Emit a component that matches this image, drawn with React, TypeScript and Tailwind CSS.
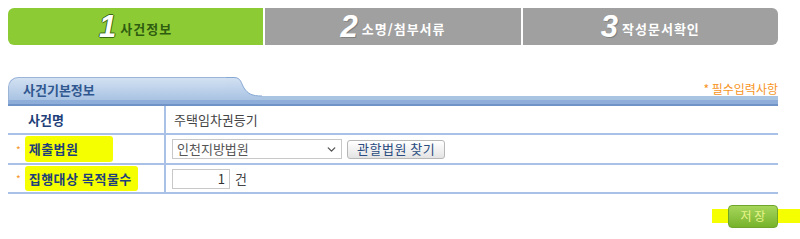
import { ChevronDown } from 'lucide-react';

const font = { fontFamily: '"Noto Sans CJK KR", "Noto Sans", sans-serif' };

const steps = [
  { n: '1', t: '사건정보', active: true },
  { n: '2', t: '소명/첨부서류', active: false },
  { n: '3', t: '작성문서확인', active: false },
];

export default function App() {
  return (
    <div className="relative w-[800px] h-[239px] bg-white px-2 pt-2 text-[13px] text-[#333]" style={font}>
      {/* STEPS */}
      <div className="w-[770px] flex gap-[2px]">
        {steps.map((s, i) => (
          <div
            key={s.n}
            className={`flex-1 h-[37px] flex items-center justify-center gap-1 ${
              s.active ? 'bg-[#8dcb35]' : 'bg-[#a0a0a0]'
            } ${i === 0 ? 'rounded-l-[6px]' : ''} ${i === 2 ? 'rounded-r-[6px]' : ''}`}
          >
            <span
              className={`text-[31px] leading-none font-bold italic text-white ${
                s.active ? '[text-shadow:-1px_0_#3b6a12,1px_0_#3b6a12,0_1px_#3b6a12,0_-1px_#3b6a12]' : '[text-shadow:1px_1px_#808080]'
              }`}
              style={{ fontFamily: '"Liberation Sans", Arial, sans-serif' }}
            >
              {s.n}
            </span>
            <span className={`text-[13px] font-bold mt-1 tracking-[1px] ${s.active ? 'text-[#2f5d10]' : 'text-white'}`}>{s.t}</span>
          </div>
        ))}
      </div>

      {/* SECTION HEADER */}
      <div className="w-[770px] mt-[32px]">
        <div className="flex items-end h-[23px]">
          <div className="w-[218px] h-[23px] rounded-tl-[10px] border-t border-l border-[#9bb5d8] bg-gradient-to-b from-[#d3e1f2] to-[#a9c3e3] flex items-center pl-[14px] pt-[2px]">
            <span className="text-[13px] font-bold text-[#30578f]">사건기본정보</span>
          </div>
          <svg width="36" height="23" viewBox="0 0 36 23" className="flex-none">
            <defs>
              <linearGradient id="hg" x1="0" y1="0" x2="0" y2="1">
                <stop offset="0" stopColor="#d3e1f2" />
                <stop offset="1" stopColor="#a9c3e3" />
              </linearGradient>
            </defs>
            <path d="M0 0.5 H8 C15 0.5 15 6 18 11 C22 17 26 19 36 19 V23 H0 Z" fill="url(#hg)" />
            <path d="M0 0.5 H8 C15 0.5 15 6 18 11 C22 17 26 19 36 19" fill="none" stroke="#86a8d4" strokeWidth="1" />
          </svg>
          <div className="flex-1 h-[4px] bg-[#a9c3e3]" />
        </div>
        <div className="absolute right-[22px] top-[80px] text-[12px] text-[#f7941d]">* 필수입력사항</div>
        <div className="h-[6px] bg-[#8eadd8] border-b-2 border-[#6f93c6]" />

        {/* TABLE */}
        <div className="flex h-[29px] border-b-2 border-[#a9c1e6]">
          <div className="w-[158px] flex items-center pl-[20px] font-bold text-[#1f3f7a] border-r-2 border-[#a9c1e6]">사건명</div>
          <div className="flex-1 flex items-center pl-[8px] text-[#444]">주택임차권등기</div>
        </div>
        <div className="flex h-[30px] border-b-2 border-[#a9c1e6]">
          <div className="w-[158px] flex items-center pl-[8px] border-r-2 border-[#a9c1e6]">
            <span className="text-[#f7941d] text-[10px] mr-[4px]">*</span>
            <span className="bg-[#f6ff00] font-bold text-[#1f3f7a] pl-[4px] py-[3px] pr-[34px] rounded-[3px] tracking-[0.5px]">제출법원</span>
          </div>
          <div className="flex-1 flex items-center pl-[6px] gap-[5px]">
            <div className="w-[170px] h-[20px] border border-[#c8c8c8] bg-white flex items-center justify-between pl-[4px] pr-[3px] text-[#555] text-[13px]">
              <span>인천지방법원</span>
              <ChevronDown size={13} strokeWidth={2.5} className="text-[#555]" />
            </div>
            <div className="h-[19px] px-[9px] border border-[#b7b7b7] rounded-[3px] bg-gradient-to-b from-white to-[#e4e4e4] flex items-center text-[#2a4c80] tracking-[0.5px]">
              관할법원 찾기
            </div>
          </div>
        </div>
        <div className="flex h-[29px] border-b-2 border-[#a9c1e6]">
          <div className="w-[158px] flex items-center pl-[8px] border-r-2 border-[#a9c1e6]">
            <span className="text-[#f7941d] text-[10px] mr-[4px]">*</span>
            <span className="bg-[#f6ff00] font-bold text-[#1f3f7a] pl-[4px] py-[3px] pr-[6px] rounded-[3px] tracking-[0.5px]">집행대상 목적물수</span>
          </div>
          <div className="flex-1 flex items-center pl-[6px] gap-[5px]">
            <div className="w-[58px] h-[20px] border border-[#c8c8c8] bg-white flex items-center justify-end pr-[4px] text-[#333]">1</div>
            <span className="text-[#444]">건</span>
          </div>
        </div>

        {/* SAVE */}
        <div className="flex justify-end mt-[10px] -mr-[22px]">
          <div className="relative w-[88px] h-[24px] flex items-center">
            <div className="absolute left-0 right-0 top-[5px] h-[14px] bg-[#f6ff00]" />
            <div className="relative ml-[16px] w-[50px] h-[23px] rounded-[4px] border border-[#6fa52a] bg-gradient-to-b from-[#a6d65a] to-[#77b32a] flex items-center justify-center text-[12px] text-[#e8f58a]">
              저 장
            </div>
          </div>
        </div>
      </div>
    </div>
  );
}
